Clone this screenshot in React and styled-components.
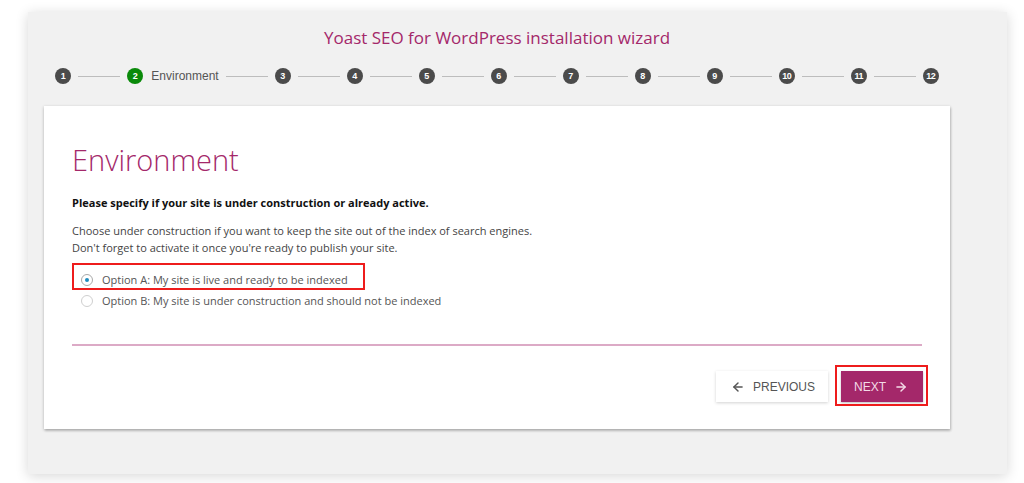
import React from "react";
import styled, { createGlobalStyle } from "styled-components";
import { ArrowLeft, ArrowRight } from "lucide-react";

const GlobalStyle = createGlobalStyle`
  html, body { margin: 0; padding: 0; background: #ffffff; }
  body { font-family: "Open Sans", "Noto Sans", sans-serif; }
  * { box-sizing: border-box; }
`;

const Page = styled.div`
  padding: 12px 0 0 28px;
  width: 1024px;
  height: 483px;
  overflow: hidden;
`;

const Panel = styled.div`
  width: 979px;
  height: 462px;
  background: #f1f1f1;
  box-shadow: 0 2px 12px rgba(0, 0, 0, 0.16);
  padding: 14px 57px 44px 16px;
`;

const Title = styled.h1`
  margin: 0;
  text-align: center;
  font-family: "Open Sans", sans-serif;
  font-weight: 400;
  font-size: 17px;
  line-height: 24px;
  color: #a4286a;
`;

const Stepper = styled.ol`
  list-style: none;
  margin: 18px 0 0;
  padding: 0;
  height: 16px;
  display: flex;
  align-items: center;
  justify-content: center;
`;

const Step = styled.li`
  display: flex;
  align-items: center;
`;

const Dot = styled.span`
  width: 16px;
  height: 16px;
  border-radius: 50%;
  background: ${(p) => (p.$active ? "#0a8a0a" : "#4b4b4b")};
  color: #fff;
  font-family: "Liberation Sans", Arial, sans-serif;
  font-weight: 700;
  font-size: 9px;
  letter-spacing: ${(p) => (p.$small ? "-0.6px" : "0")};
  display: flex;
  align-items: center;
  justify-content: center;
`;

const StepLabel = styled.span`
  margin-left: 8px;
  font-family: "Liberation Sans", Arial, sans-serif;
  font-size: 12px;
  color: #555;
`;

const Connector = styled.span`
  width: 42px;
  height: 1px;
  margin: 0 7px;
  background: #bdbdbd;
`;

const Card = styled.section`
  margin-top: 22px;
  background: #fff;
  box-shadow: 0 1px 3px rgba(0, 0, 0, 0.25), 1px 2px 2px rgba(0, 0, 0, 0.12);
  padding: 36px 28px 27px;
`;

const Heading = styled.h2`
  margin: 0;
  font-family: "Open Sans", sans-serif;
  font-weight: 300;
  font-size: 29px;
  line-height: 36px;
  color: #a4286a;
`;

const Lead = styled.p`
  margin: 17px 0 0;
  font-family: "Open Sans", sans-serif;
  font-weight: 700;
  font-size: 11px;
  line-height: 16px;
  color: #111;
`;

const Text = styled.p`
  margin: 11px 0 0;
  font-family: "Open Sans", sans-serif;
  font-size: 11px;
  line-height: 17px;
  color: #444;
`;

const Options = styled.div`
  margin-top: 13px;
  display: flex;
  flex-direction: column;
  align-items: flex-start;
`;

const Option = styled.label`
  position: relative;
  height: 21px;
  display: flex;
  align-items: center;
  padding-left: 9px;
  font-family: "Open Sans", sans-serif;
  font-size: 11px;
  color: #555;
`;

const Radio = styled.span`
  width: 12px;
  height: 12px;
  border-radius: 50%;
  border: 1px solid ${(p) => (p.$checked ? "#a9a9a9" : "#cfcfcf")};
  background: #fff;
  margin-right: 9px;
  display: flex;
  align-items: center;
  justify-content: center;
  &::after {
    content: "";
    width: 4px;
    height: 4px;
    border-radius: 50%;
    background: ${(p) => (p.$checked ? "#1e8cbe" : "transparent")};
  }
`;

const Highlight = styled.span`
  position: absolute;
  pointer-events: none;
  border: 2px solid #ee1c1c;
  top: ${(p) => p.$t}px;
  right: ${(p) => p.$r}px;
  bottom: ${(p) => p.$b}px;
  left: ${(p) => p.$l}px;
`;

const Divider = styled.div`
  margin-top: 33px;
  height: 2px;
  background: #dcaac6;
`;

const Actions = styled.div`
  margin: 25px -1px 0 0;
  display: flex;
  justify-content: flex-end;
  gap: 13px;
`;

const ButtonWrap = styled.div`
  position: relative;
`;

const Button = styled.button`
  height: 31px;
  border: 0;
  border-radius: 0;
  display: flex;
  align-items: center;
  gap: 8px;
  padding: ${(p) => (p.$primary ? "0 15px 0 13px" : "0 13px 0 15px")};
  background: ${(p) => (p.$primary ? "#a4286a" : "#fff")};
  color: ${(p) => (p.$primary ? "#f3dbe7" : "#555")};
  box-shadow: ${(p) =>
    p.$primary ? "0 1px 2px rgba(0,0,0,0.25)" : "0 1px 3px rgba(0,0,0,0.18)"};
  font-family: "Liberation Sans", Arial, sans-serif;
  font-size: 12px;
  text-transform: uppercase;
  cursor: pointer;
  svg { display: block; }
`;

const steps = [1, 2, 3, 4, 5, 6, 7, 8, 9, 10, 11, 12];

export default function App() {
  return (
    <>
      <GlobalStyle />
      <Page>
        <Panel>
          <Title>Yoast SEO for WordPress installation wizard</Title>
          <Stepper>
            {steps.map((n, i) => (
              <React.Fragment key={n}>
                {i > 0 && <Connector />}
                <Step>
                  <Dot $active={n === 2} $small={n >= 10}>{n}</Dot>
                  {n === 2 && <StepLabel>Environment</StepLabel>}
                </Step>
              </React.Fragment>
            ))}
          </Stepper>
          <Card>
            <Heading>Environment</Heading>
            <Lead>Please specify if your site is under construction or already active.</Lead>
            <Text>
              Choose under construction if you want to keep the site out of the index of search engines.
              <br />
              Don't forget to activate it once you're ready to publish your site.
            </Text>
            <Options>
              <Option>
                <Radio $checked />
                Option A: My site is live and ready to be indexed
                <Highlight $t={-6} $r={-17} $b={0} $l={0} />
              </Option>
              <Option>
                <Radio />
                Option B: My site is under construction and should not be indexed
              </Option>
            </Options>
            <Divider />
            <Actions>
              <ButtonWrap>
                <Button>
                  <ArrowLeft size={14} strokeWidth={2.5} />
                  Previous
                </Button>
              </ButtonWrap>
              <ButtonWrap>
                <Button $primary>
                  Next
                  <ArrowRight size={14} strokeWidth={2.5} />
                </Button>
                <Highlight $t={-6} $r={-5} $b={-4} $l={-6} />
              </ButtonWrap>
            </Actions>
          </Card>
        </Panel>
      </Page>
    </>
  );
}
